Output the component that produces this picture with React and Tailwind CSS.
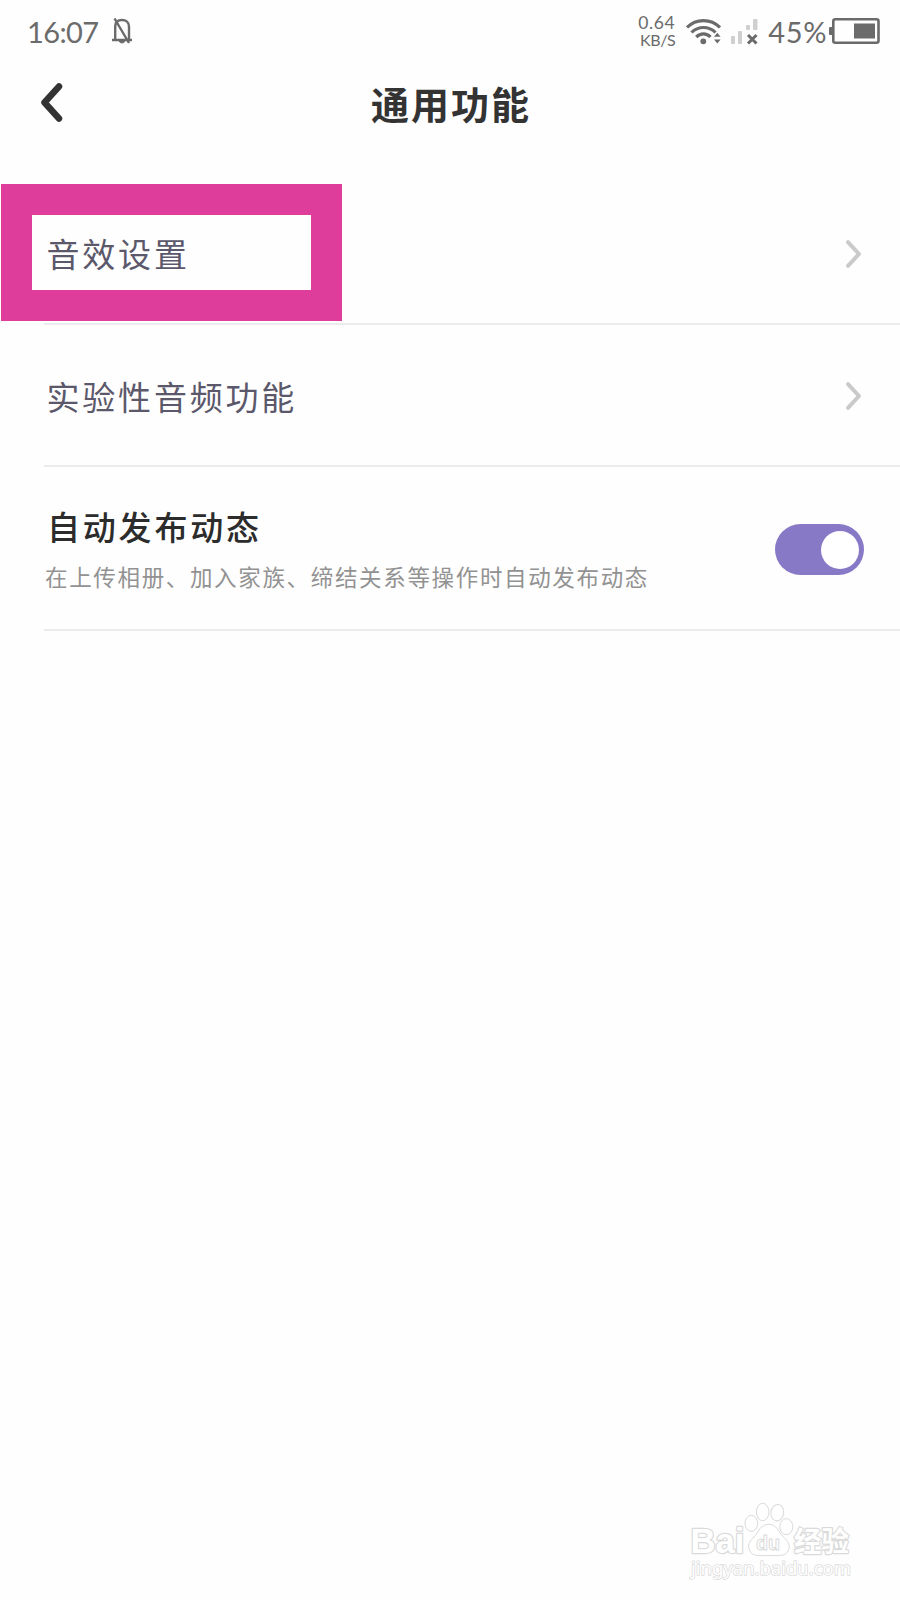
import React, { useState } from "react";

const links = [
  { id: "sound", label: "音效设置", highlighted: true },
  { id: "lab", label: "实验性音频功能", highlighted: false },
];

function StatusBar() {
  return (
    <header className="flex h-16 items-center justify-between pl-[27px] pr-5 pb-0.5 font-['Lato','Noto_Sans_CJK_SC',sans-serif] text-[#6b6b6b]">
      <div className="flex items-center gap-[13px]">
        <span className="text-[29px] leading-none tracking-[-0.6px]">16:07</span>
        <svg className="h-[26px] w-5" viewBox="0 0 20 26" fill="none" stroke="currentColor" strokeWidth="2.4">
          <path d="M0 22H20M3.2 21V8.5C3.2 4.2 6 2 10 2S17 4.2 17 8.5V21M2.5.5L17 25" />
          <path d="M7 23H13L11.5 24.8H8.5Z" fill="currentColor" strokeWidth="1" />
        </svg>
      </div>

      <div className="flex items-center">
        <div className="mr-[11px] flex flex-col items-end pb-px">
          <span className="text-[17.5px] leading-[17px] tracking-[0.6px]">0.64</span>
          <span className="text-base leading-[17px] tracking-[-0.4px]">KB/S</span>
        </div>
        {/* Wifi */}
        <svg className="mr-2.5 h-[27px] w-[35px]" viewBox="0 0 35 27" fill="none" stroke="currentColor" strokeWidth="3.2">
          <path d="M1 9.5C10 .2 25 .2 34 9.5" />
          <path d="M5.5 14.5C12 7.8 23 7.8 29.5 14.5" />
          <path d="M10.2 19C14.5 14.8 20.5 14.8 24.5 19" />
          <circle cx="17.3" cy="23.3" r="2.9" fill="currentColor" stroke="none" />
          <path d="M28 18.8L31.3 14.8L34.6 18.8ZM28 21.5H34.6L31.3 25.5Z" fill="currentColor" stroke="none" />
        </svg>
        {/* Sinal sem rede */}
        <svg className="mr-2.5 h-[27px] w-[27px]" viewBox="0 0 27 27">
          <g fill="#cfcfcf">
            <rect x="0" y="18" width="4" height="8" rx="1" />
            <rect x="7" y="13" width="4" height="13" rx="1" />
            <rect x="15" y="7" width="4" height="5" rx="1" />
            <rect x="22" y="1" width="4.5" height="11" rx="1" />
          </g>
          <path d="M17 17L25.5 25.5M25.5 17L17 25.5" stroke="currentColor" strokeWidth="3" />
        </svg>
        <span className="text-[29px] leading-none tracking-[0.6px]">45%</span>
        <svg className="ml-0.5 h-[26px] w-[51px]" viewBox="0 0 51 26">
          <rect x="4.3" y="1.3" width="45.2" height="23.4" rx="2" fill="none" stroke="currentColor" strokeWidth="2.6" />
          <rect x="0" y="9" width="4" height="8" rx="1" fill="currentColor" />
          <rect x="25" y="5.5" width="21" height="15" fill="currentColor" />
        </svg>
      </div>
    </header>
  );
}

function LinkRow({ label, highlighted }) {
  return (
    <li className="relative ml-11 flex h-[142.5px] items-center justify-between border-b-2 border-[#ececee] pt-[3px] pl-[2.5px] pr-[38px]">
      {highlighted && (
        <div className="absolute top-[1.5px] -left-[43px] h-[137px] w-[341px] border-[31px] border-[#df3d9b]" />
      )}
      <span className="relative text-[33px] leading-none tracking-[2.8px] text-[#5b586b]">{label}</span>
      <svg className="h-[30px] w-[17px]" viewBox="0 0 17 30" fill="none" stroke="#cacaca" strokeWidth="4" strokeLinecap="round" strokeLinejoin="round">
        <path d="M3 3.2L14 15L3 26.8" />
      </svg>
    </li>
  );
}

function Watermark() {
  return (
    <svg
      className="h-[90px] w-[180px]"
      viewBox="0 0 180 90"
      fill="#fff"
      stroke="#dadada"
      strokeWidth="1"
      fontFamily="'Liberation Sans','Noto Sans CJK SC',sans-serif"
    >
      <g strokeWidth="2.4" paintOrder="stroke" strokeLinejoin="round">
        <text x="8.5" y="51" fontSize="35" fontWeight="700" textLength="54" lengthAdjust="spacingAndGlyphs">Bai</text>
        <text x="112" y="49.5" fontSize="28" fontWeight="700" textLength="55" lengthAdjust="spacingAndGlyphs">经验</text>
        <text x="9" y="73" fontSize="18.5" strokeWidth="1.5" fontFamily="'Noto Sans',sans-serif" textLength="160" lengthAdjust="spacingAndGlyphs">jingyan.baidu.com</text>
      </g>
      <ellipse cx="69.3" cy="21.3" rx="6.3" ry="8" />
      <ellipse cx="80.7" cy="10" rx="6.3" ry="8.7" />
      <ellipse cx="95.3" cy="10.7" rx="6.4" ry="8.2" transform="rotate(8 95.3 10.7)" />
      <ellipse cx="104.3" cy="24.7" rx="6.5" ry="8" />
      <path d="M86.7 22.3C78 22.3 77 30 72 35C67 40 65.5 43 67.5 48C70 55 78 53.5 87 53.5S104 55 106.5 48C108.5 43 106 39 101 34.5C96.500 30 95 22.3 86.7 22.3Z" />
      <text x="74" y="47.500" fontSize="21" fontWeight="700" textLength="24" lengthAdjust="spacingAndGlyphs">du</text>
    </svg>
  );
}

export default function App() {
  const [autoPost, setAutoPost] = useState(true);

  return (
    <div className="flex h-[1600px] w-[900px] flex-col overflow-hidden bg-[#fefefe] font-['Noto_Sans_CJK_SC',sans-serif]">
      <StatusBar />

      <div className="grid h-[118px] grid-cols-[1fr_auto_1fr] items-start pt-[18px]">
        <button className="ml-10 w-6">
          <svg className="h-[42px] w-6" viewBox="0 0 24 42" fill="none" stroke="#333" strokeWidth="6.5" strokeLinecap="round" strokeLinejoin="round">
            <path d="M19 4.500L4.500 20.500L19 36.500" />
          </svg>
        </button>
        <h1 className="pt-0.5 pl-0.5 text-[38px] leading-[38px] font-bold tracking-[2px] text-[#333]">通用功能</h1>
      </div>

      <ul>
        {links.map((link) => (
          <LinkRow key={link.id} label={link.label} highlighted={link.highlighted} />
        ))}
        <li className="ml-11 flex h-[163.5px] items-center justify-between border-b-2 border-[#ececee] pr-9">
          <div className="flex flex-col gap-[18px] pt-0.5 pl-px">
            <span className="pl-0.5 text-[33px] leading-9 font-medium tracking-[2.8px] text-[#2c2c2c]">自动发布动态</span>
            <span className="text-[22.5px] leading-7 tracking-[1.66px] text-[#929292]">
              在上传相册、加入家族、缔结关系等操作时自动发布动态
            </span>
          </div>
          <button
            role="switch"
            aria-checked={autoPost}
            onClick={() => setAutoPost(!autoPost)}
            className={`mt-1 flex h-[51px] w-[89px] items-center rounded-full px-[5px] ${
              autoPost ? "justify-end bg-[#8879c7]" : "justify-start bg-gray-300"
            }`}
          >
            <span className="h-[38px] w-[38px] rounded-full bg-white" />
          </button>
        </li>
      </ul>

      <div className="mt-auto flex justify-end pr-[38px] pb-2">
        <Watermark />
      </div>
    </div>
  );
}
